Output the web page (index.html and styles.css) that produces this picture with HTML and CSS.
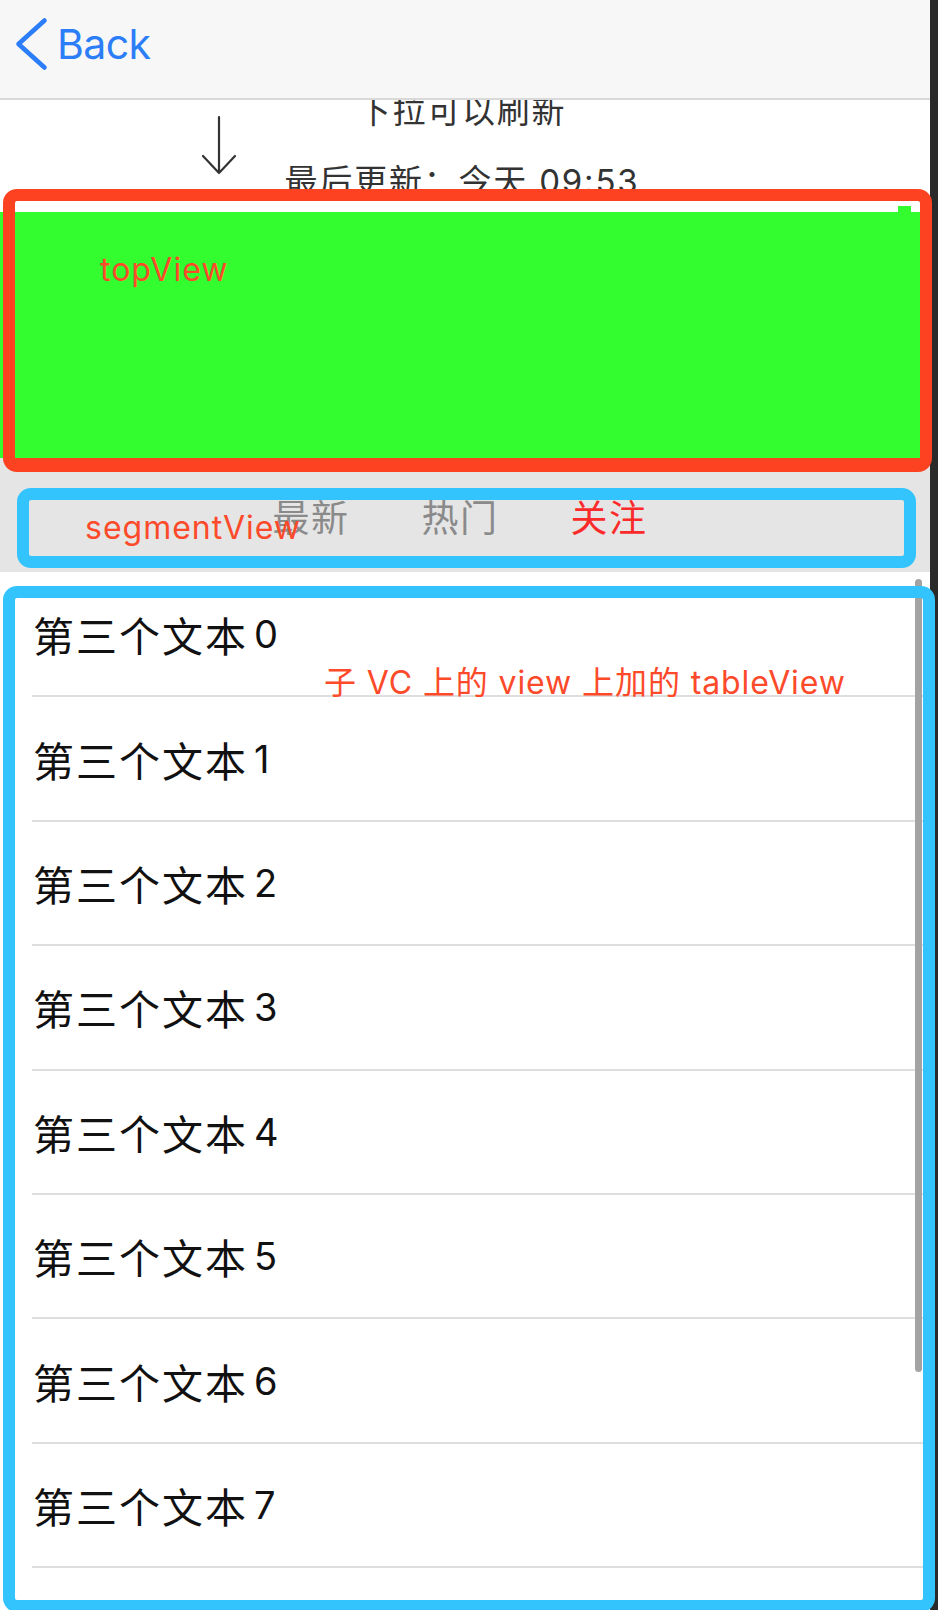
FILE: index.html
```html
<!DOCTYPE html>
<html lang="zh-CN">
<head>
<meta charset="utf-8">
<title>topView / segmentView / tableView</title>
<link rel="stylesheet" href="styles.css">
</head>
<body>
<div class="frame">
  <div class="screen">
    <header class="nav">
      <a class="back" href="#">
        <svg class="chevron" width="34" height="56" viewBox="0 0 34 56"><path d="M30.5 4.5 L4.5 28 L30.5 51.5" fill="none" stroke="#2c7ef8" stroke-width="4.6" stroke-linecap="round" stroke-linejoin="round"/></svg>
        <span class="back-text">Back</span>
      </a>
    </header>
    <section class="refresh">
      <svg class="refresh-arrow" width="40" height="60" viewBox="0 0 40 60"><path d="M20 2 V58 M4 41 L20 58 L36 41" fill="none" stroke="#333" stroke-width="2.2" stroke-linecap="round" stroke-linejoin="round"/></svg>
      <div class="refresh-text">
        <div class="refresh-line">下拉可以刷新</div>
        <div class="refresh-line">最后更新：今天 09:53</div>
      </div>
    </section>
    <section class="top-view"><span class="top-indicator"></span></section>
    <nav class="segment">
      <span class="seg-item">最新</span>
      <span class="seg-item">热门</span>
      <span class="seg-item active">关注</span>
    </nav>
    <section class="list">
      <ul class="rows">
        <li class="row">第三个文本<span class="num">0</span></li>
        <li class="row">第三个文本<span class="num">1</span></li>
        <li class="row">第三个文本<span class="num">2</span></li>
        <li class="row">第三个文本<span class="num">3</span></li>
        <li class="row">第三个文本<span class="num">4</span></li>
        <li class="row">第三个文本<span class="num">5</span></li>
        <li class="row">第三个文本<span class="num">6</span></li>
        <li class="row">第三个文本<span class="num">7</span></li>
        <li class="row">第三个文本<span class="num">8</span></li>
      </ul>
      <div class="scrollbar"></div>
    </section>
  </div>
  <div class="note note-top"><span class="note-label">topView</span></div>
  <div class="note note-segment"><span class="note-label">segmentView</span></div>
  <div class="note note-table"><span class="note-label">子 VC 上的 view 上加的 tableView</span></div>
</div>
</body>
</html>
```

FILE: styles.css
```css
html, body {
  margin: 0;
  padding: 0;
}
body {
  width: 938px;
  height: 1610px;
  overflow: hidden;
  background: #2a2a2a;
  font-family: Inter, "Noto Sans CJK SC", sans-serif;
}
.frame {
  position: relative;
  width: 938px;
  height: 1610px;
}
.screen {
  width: 930px;
  height: 1610px;
  overflow: hidden;
  background: #fff;
  display: flex;
  flex-direction: column;
}

/* nav bar */
.nav {
  flex: none;
  height: 100px;
  box-sizing: border-box;
  background: #f7f7f7;
  border-bottom: 2px solid #d9d9d9;
  display: flex;
  align-items: flex-start;
  padding: 16px 0 0 14px;
}
.back {
  display: flex;
  align-items: center;
  gap: 9px;
  text-decoration: none;
  color: #2c7ef8;
}
.chevron { display: block; }
.back-text {
  font-size: 41px;
  line-height: 56px;
  letter-spacing: -0.6px;
}

/* pull to refresh header */
.refresh {
  flex: none;
  height: 112px;
  overflow: hidden;
  display: grid;
  grid-template-columns: 1fr;
  grid-template-rows: 1fr;
}
.refresh-arrow {
  grid-area: 1 / 1;
  justify-self: start;
  align-self: start;
  margin: 15px 0 0 199px;
  display: block;
}
.refresh-text {
  grid-area: 1 / 1;
  justify-self: center;
  align-self: start;
  margin: -24px 6px 0 0;
  color: #333;
  font-size: 33px;
  line-height: 70px;
  letter-spacing: 1.8px;
  text-align: center;
}
.refresh-line { white-space: nowrap; }

/* green top view */
.top-view {
  flex: none;
  height: 246px;
  background: #34fd2f;
  position: relative;
}
.top-indicator {
  position: absolute;
  left: 898px;
  top: -6px;
  width: 13px;
  height: 6px;
  background: #34fd2f;
}

/* segment */
.segment {
  flex: none;
  height: 114px;
  box-sizing: border-box;
  background: #e5e5e5;
  display: flex;
  justify-content: center;
  align-items: center;
  padding: 8px 10px 0 0;
}
.seg-item {
  width: 149px;
  text-align: center;
  font-size: 37px;
  line-height: 46px;
  letter-spacing: 1.5px;
  color: #8a8a8a;
}
.seg-item.active { color: #fc2b2b; }

/* table */
.list {
  flex: 1;
  position: relative;
  overflow: hidden;
  padding-top: 1px;
}
.rows {
  list-style: none;
  margin: 0;
  padding: 0 0 0 32px;
}
.row {
  height: 124.4px;
  box-sizing: border-box;
  border-bottom: 2px solid #dedede;
  display: flex;
  align-items: center;
  padding-left: 1px;
  font-size: 41px;
  letter-spacing: 2px;
  color: #111;
}
.num {
  margin-left: 6px;
  font-size: 38px;
}
.scrollbar {
  position: absolute;
  left: 915px;
  top: 7px;
  width: 7px;
  height: 793px;
  border-radius: 4px;
  background: #a3a3a3;
}

/* annotation overlays */
.note {
  position: absolute;
  box-sizing: border-box;
  border: 12px solid;
  border-radius: 14px;
}
.note-top {
  left: 3px;
  top: 189px;
  width: 929px;
  height: 283px;
  border-color: #fc4220;
  border-bottom-width: 14px;
  padding: 51px 0 0 85px;
}
.note-segment {
  left: 17px;
  top: 488px;
  width: 899px;
  height: 80px;
  border-color: #33c4fd;
  padding: 10px 0 0 56px;
}
.note-table {
  left: 3px;
  top: 586px;
  width: 932px;
  height: 1026px;
  border-color: #33c4fd;
  padding: 65px 0 0 309px;
}
.note-label {
  display: block;
  color: #fc4a2a;
  font-size: 32px;
  line-height: 36px;
  letter-spacing: 1px;
  white-space: nowrap;
}
.note-table .note-label {
  font-size: 32px;
  line-height: 40px;
  letter-spacing: 0.9px;
}
```
